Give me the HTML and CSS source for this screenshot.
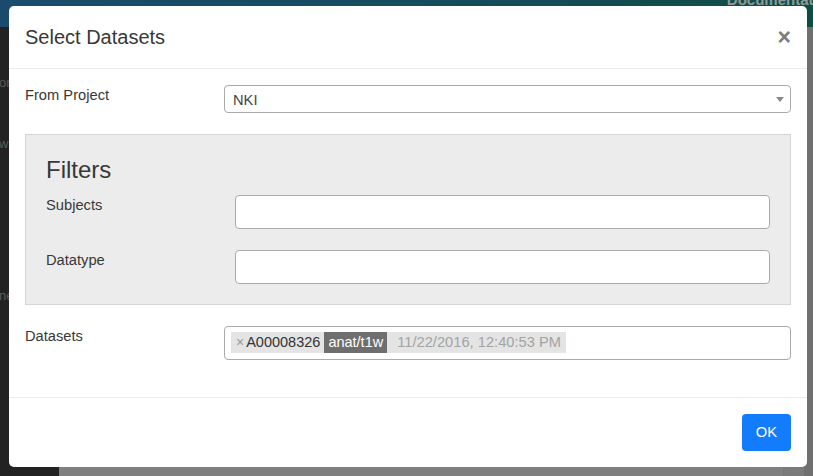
FILE: index.html
```html
<!DOCTYPE html>
<html lang="en">
<head>
<meta charset="utf-8">
<title>Select Datasets</title>
<link rel="stylesheet" href="styles.css">
</head>
<body>
<div class="page">
  <div class="topbar"><span class="topbar-link">Documentation</span></div>
  <div class="below">
    <div class="sidebar">
      <span class="side-item side-1">or</span>
      <span class="side-item side-2">w</span>
      <span class="side-item side-3">ne</span>
    </div>
    <div class="main"></div>
    <div class="rail"></div>
    <div class="edge"></div>
  </div>
</div>

<div class="modal">
  <div class="modal-header">
    <h5 class="modal-title">Select Datasets</h5>
    <span class="close">×</span>
  </div>
  <div class="modal-body">
    <div class="row">
      <label class="label">From Project</label>
      <div class="select">
        <span class="select-text">NKI</span>
        <span class="caret"></span>
      </div>
    </div>
    <div class="well">
      <h3 class="well-title">Filters</h3>
      <div class="row row-inner">
        <label class="label">Subjects</label>
        <div class="input"></div>
      </div>
      <div class="row row-inner">
        <label class="label">Datatype</label>
        <div class="input"></div>
      </div>
    </div>
    <div class="row">
      <label class="label">Datasets</label>
      <div class="multi">
        <span class="tag">
          <span class="tag-x">×</span>
          <span class="tag-name">A00008326</span>
          <span class="tag-type">anat/t1w</span>
          <span class="tag-date">11/22/2016, 12:40:53 PM</span>
        </span>
      </div>
    </div>
  </div>
  <div class="modal-footer">
    <button class="btn-ok">OK</button>
  </div>
</div>
</body>
</html>
```

FILE: styles.css
```css
* { box-sizing: border-box; }
html, body {
  margin: 0;
  padding: 0;
  width: 813px;
  height: 476px;
  overflow: hidden;
  font-family: "Liberation Sans", Arial, sans-serif;
  color: #333;
}
body { position: relative; }

.page {
  display: flex;
  flex-direction: column;
  width: 813px;
  height: 476px;
}
.topbar {
  height: 27px;
  flex: none;
  background: linear-gradient(90deg, #1b4a6d 0%, #164c5f 50%, #0f4d42 100%);
  display: flex;
  justify-content: flex-end;
  align-items: flex-start;
  overflow: hidden;
}
.topbar-link {
  font-size: 15px;
  font-weight: bold;
  color: #8f9a98;
  margin-right: -23px;
  margin-top: -9px;
  line-height: 17px;
  white-space: nowrap;
}
.below {
  flex: 1;
  display: flex;
}
.sidebar {
  width: 59px;
  background: #222;
  display: flex;
  flex-direction: column;
}
.side-item {
  font-size: 13px;
  color: #5c5c5c;
  line-height: 15px;
  margin-left: -1px;
}
.side-1 { margin-top: 48px; }
.side-2 { margin-top: 46px; }
.side-3 { margin-top: 137px; }
.main { flex: 1; background: #7f7f7f; }
.rail { width: 21px; background: #7a7a7a; border-left: 1px solid #757575; }
.edge { width: 9px; background: #6f6f6f; }

.modal {
  position: absolute;
  left: 9px;
  top: 6px;
  width: 798px;
  background: #fff;
  border-radius: 5px;
}
.modal-header {
  display: flex;
  justify-content: space-between;
  align-items: flex-start;
  padding: 16px;
  border-bottom: 1px solid #e9ecef;
}
.modal-title {
  margin: 0;
  font-size: 20px;
  font-weight: normal;
  line-height: 30px;
  color: #383838;
}
.close {
  font-size: 23px;
  font-weight: bold;
  line-height: 22px;
  color: #7c7c7c;
  margin-top: 4px;
}

.modal-body { padding: 16px; }
.row {
  display: grid;
  grid-template-columns: 199px 1fr;
  margin-bottom: 21px;
}
.label {
  font-size: 14.7px;
  line-height: 21px;
  color: #383838;
}
.select {
  height: 28px;
  border: 1px solid #aaa;
  border-radius: 4px;
  display: flex;
  align-items: center;
  justify-content: space-between;
  padding: 0 6px 0 8px;
}
.select-text {
  font-size: 14.7px;
  color: #444;
  line-height: 26px;
  margin-top: 1px;
}
.caret {
  width: 0;
  height: 0;
  border-left: 4px solid transparent;
  border-right: 4px solid transparent;
  border-top: 5px solid #888;
  margin-top: 1px;
}

.well {
  background: #ececec;
  border: 1px solid #d4d4d4;
  padding: 20px 20px 0 20px;
  margin-bottom: 21px;
}
.well-title {
  margin: 0 0 11px 0;
  font-size: 24px;
  font-weight: normal;
  line-height: 29px;
  color: #383838;
}
.row-inner { grid-template-columns: 189px 1fr; }
.row-inner:last-child { margin-bottom: 20px; }
.input {
  height: 34px;
  background: #fff;
  border: 1px solid #aaa;
  border-radius: 4px;
}

.multi {
  height: 34px;
  border: 1px solid #aaa;
  border-radius: 4px;
  padding: 5px 6px;
  display: flex;
  align-items: flex-start;
}
.tag {
  display: inline-flex;
  align-items: center;
  height: 21px;
  background: #e4e4e4;
  padding: 0 5px 0 5px;
  font-size: 14.5px;
  line-height: 21px;
}
.tag-x {
  color: #999;
  font-size: 14px;
  margin-right: 2px;
}
.tag-name { color: #333; margin-right: 4px; }
.tag-type {
  background: #6e6e6e;
  color: #fff;
  padding: 0 4px;
  height: 21px;
  margin-right: 10px;
}
.tag-date { color: #a3a3a3; font-size: 14.7px; }

.modal-footer {
  border-top: 1px solid #e9ecef;
  padding: 16px;
  display: flex;
  justify-content: flex-end;
}
.btn-ok {
  height: 37px;
  padding: 0 14px;
  border: none;
  border-radius: 4px;
  background: #127cfc;
  color: #fff;
  font-family: "Liberation Sans", Arial, sans-serif;
  font-size: 14.7px;
  line-height: 37px;
}
```
